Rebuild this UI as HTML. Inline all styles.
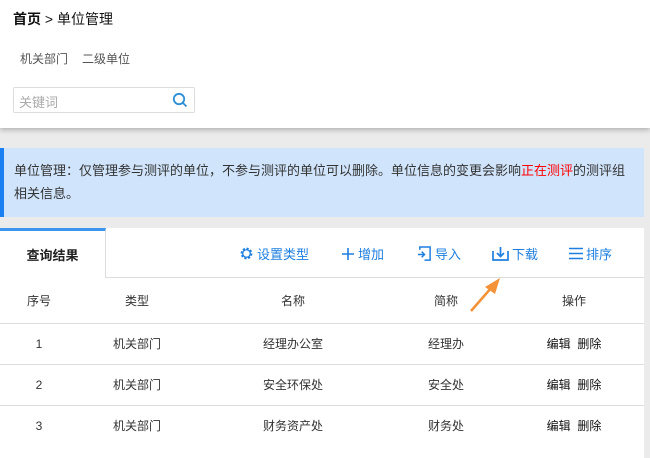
<!DOCTYPE html>
<html><head><meta charset="utf-8"><style>
*{margin:0;padding:0;box-sizing:border-box}
body{width:650px;height:446px;overflow:hidden;background:#ebebeb;font-family:"Liberation Sans","Noto Sans CJK SC",sans-serif;color:#333;position:relative}
.top{position:absolute;left:0;top:0;width:650px;height:128px;background:#fff;box-shadow:0 2px 5px rgba(0,0,0,.25)}
.abs{position:absolute;white-space:nowrap}
.info{position:absolute;left:0;top:148px;width:644px;height:69px;background:#d0e4fb;border-left:4px solid #1a7ff0;padding:11px 0 0 10px;font-size:13px;line-height:23px;color:#333}
.card{position:absolute;left:0;top:228px;width:644px;height:230px;background:#fff}
.tab{position:absolute;left:0;top:0;width:106px;height:50px;border-top:3px solid #3d96ee;border-right:1px solid #ddd;font-weight:bold;font-size:13px;color:#222;text-align:center;line-height:50px}
.tabline{position:absolute;left:105px;top:49px;width:539px;height:1px;background:#ddd}
.btn{position:absolute;top:16px;font-size:13px;color:#1e7fe0;display:flex;align-items:center;gap:3px}
.row{position:absolute;left:0;width:644px;height:41px;font-size:12px;color:#333}
.row span{position:absolute;top:0;line-height:41px;transform:translateX(-50%)}
.line{position:absolute;left:0;width:644px;height:1px;background:#ddd}
</style></head><body>
<div class="top">
<div class="abs" style="left:13px;top:9px;font-size:14px;color:#111;font-weight:bold">首页 <span style="font-weight:normal">&gt;</span> <span style="font-weight:normal">单位管理</span></div>
<div class="abs" style="left:20px;top:50px;font-size:12px;color:#555">机关部门<span style="display:inline-block;width:14px"></span>二级单位</div>
<div class="abs" style="left:13px;top:87px;width:182px;height:26px;border:1px solid #ddd;border-radius:2px;font-size:13px;color:#aaa;padding:4px 0 0 5px">关键词
<svg style="position:absolute;right:6px;top:4px" width="16" height="16" viewBox="0 0 16 16"><circle cx="7" cy="7" r="5.2" fill="none" stroke="#2b8fd8" stroke-width="1.8"/><line x1="11" y1="11" x2="14.5" y2="14.5" stroke="#2b8fd8" stroke-width="1.8"/></svg></div>
</div>
<div class="info">单位管理：仅管理参与测评的单位，不参与测评的单位可以删除。单位信息的变更会影响<span style="color:#f00">正在测评</span>的测评组<br>相关信息。</div>
<div class="card">
<div class="tab">查询结果</div>
<div class="tabline"></div>
<div class="btn" style="left:239px"><svg width="15" height="15" viewBox="0 0 16 16"><circle cx="8" cy="8" r="5" fill="none" stroke="#1e7fe0" stroke-width="2.6" stroke-dasharray="2.2 1.7"/><circle cx="8" cy="8" r="4" fill="none" stroke="#1e7fe0" stroke-width="1.4"/></svg>设置类型</div>
<div class="btn" style="left:341px"><svg width="14" height="14" viewBox="0 0 14 14"><path d="M7 1v12M1 7h12" stroke="#1e7fe0" stroke-width="1.6"/></svg> 增加</div>
<div class="btn" style="left:417px"><svg width="15" height="15" viewBox="0 0 16 16"><path d="M3 4V1h11v14H8M1 9h7M5 6l3 3-3 3" fill="none" stroke="#1e7fe0" stroke-width="1.6"/></svg> 导入</div>
<div class="btn" style="left:492px"><svg width="17" height="15" viewBox="0 0 17 15"><path d="M1 5v9h15V5M8.5 1v9M5 7l3.5 3.5L12 7" fill="none" stroke="#1e7fe0" stroke-width="1.7"/></svg>下载</div>
<div class="btn" style="left:569px"><svg width="14" height="13" viewBox="0 0 14 13"><path d="M0 1.5h14M0 6.5h14M0 11.5h14" stroke="#1e7fe0" stroke-width="1.5"/></svg> 排序</div>
<div class="row" style="top:52px;height:43px"><span style="left:39px;line-height:43px">序号</span><span style="left:137px;line-height:43px">类型</span><span style="left:293px;line-height:43px">名称</span><span style="left:446px;line-height:43px">简称</span><span style="left:574px;line-height:43px">操作</span></div>
<div class="line" style="top:95px"></div>
<div class="row" style="top:96px"><span style="left:39px">1</span><span style="left:137px">机关部门</span><span style="left:293px">经理办公室</span><span style="left:446px">经理办</span><span style="left:574px;color:#111">编辑&nbsp;&nbsp;删除</span></div>
<div class="line" style="top:136px"></div>
<div class="row" style="top:137px"><span style="left:39px">2</span><span style="left:137px">机关部门</span><span style="left:293px">安全环保处</span><span style="left:446px">安全处</span><span style="left:574px;color:#111">编辑&nbsp;&nbsp;删除</span></div>
<div class="line" style="top:177px"></div>
<div class="row" style="top:178px"><span style="left:39px">3</span><span style="left:137px">机关部门</span><span style="left:293px">财务资产处</span><span style="left:446px">财务处</span><span style="left:574px;color:#111">编辑&nbsp;&nbsp;删除</span></div>
</div>
<svg class="abs" style="left:465px;top:275px" width="40" height="40" viewBox="0 0 40 40"><path d="M6 36L27 12" stroke="#f39237" stroke-width="2.5"/><path d="M20 12L35 3 30 19Z" fill="#f39237"/></svg>
</body></html>
